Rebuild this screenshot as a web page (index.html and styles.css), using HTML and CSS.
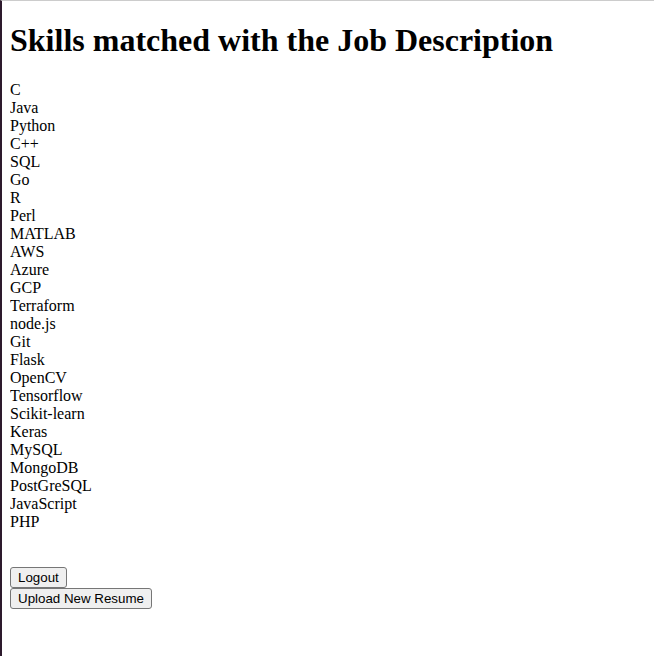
FILE: index.html
```html
<!DOCTYPE html>
<html class="page">
<head>
<meta charset="utf-8">
<title>Skills</title>
<link rel="stylesheet" href="styles.css">
</head>
<body class="body">
<h1 class="title">Skills matched with the Job Description</h1>
<div class="skills">
<div class="skill">C</div>
<div class="skill">Java</div>
<div class="skill">Python</div>
<div class="skill">C++</div>
<div class="skill">SQL</div>
<div class="skill">Go</div>
<div class="skill">R</div>
<div class="skill">Perl</div>
<div class="skill">MATLAB</div>
<div class="skill">AWS</div>
<div class="skill">Azure</div>
<div class="skill">GCP</div>
<div class="skill">Terraform</div>
<div class="skill">node.js</div>
<div class="skill">Git</div>
<div class="skill">Flask</div>
<div class="skill">OpenCV</div>
<div class="skill">Tensorflow</div>
<div class="skill">Scikit-learn</div>
<div class="skill">Keras</div>
<div class="skill">MySQL</div>
<div class="skill">MongoDB</div>
<div class="skill">PostGreSQL</div>
<div class="skill">JavaScript</div>
<div class="skill">PHP</div>
</div>
<br><br>
<form class="form"><button type="button" class="btn">Logout</button></form>
<form class="form"><button type="button" class="btn">Upload New Resume</button></form>
</body>
</html>
```
FILE: styles.css
```css
.page {
  border-top: 1px solid #cccccc;
  border-left: 2px solid #2d1a2d;
  min-height: 100%;
  box-sizing: border-box;
}
.body {
  margin: 0 8px 8px 8px;
  font-family: "Liberation Serif", serif;
  font-size: 16px;
  color: #000;
  background: #fff;
}
.title {
  font-size: 32px;
  font-weight: bold;
  margin: 21.44px 0;
}
.skill {
  line-height: 18px;
}
.form {
  margin: 0;
}
.btn {
  font-family: "Liberation Sans", Arial, sans-serif;
  font-size: 13.333px;
  line-height: 15px;
  padding: 2px 7px;
  border: 1px solid #767676;
  border-radius: 3px;
  background: #efefef;
  color: #000;
}
```
